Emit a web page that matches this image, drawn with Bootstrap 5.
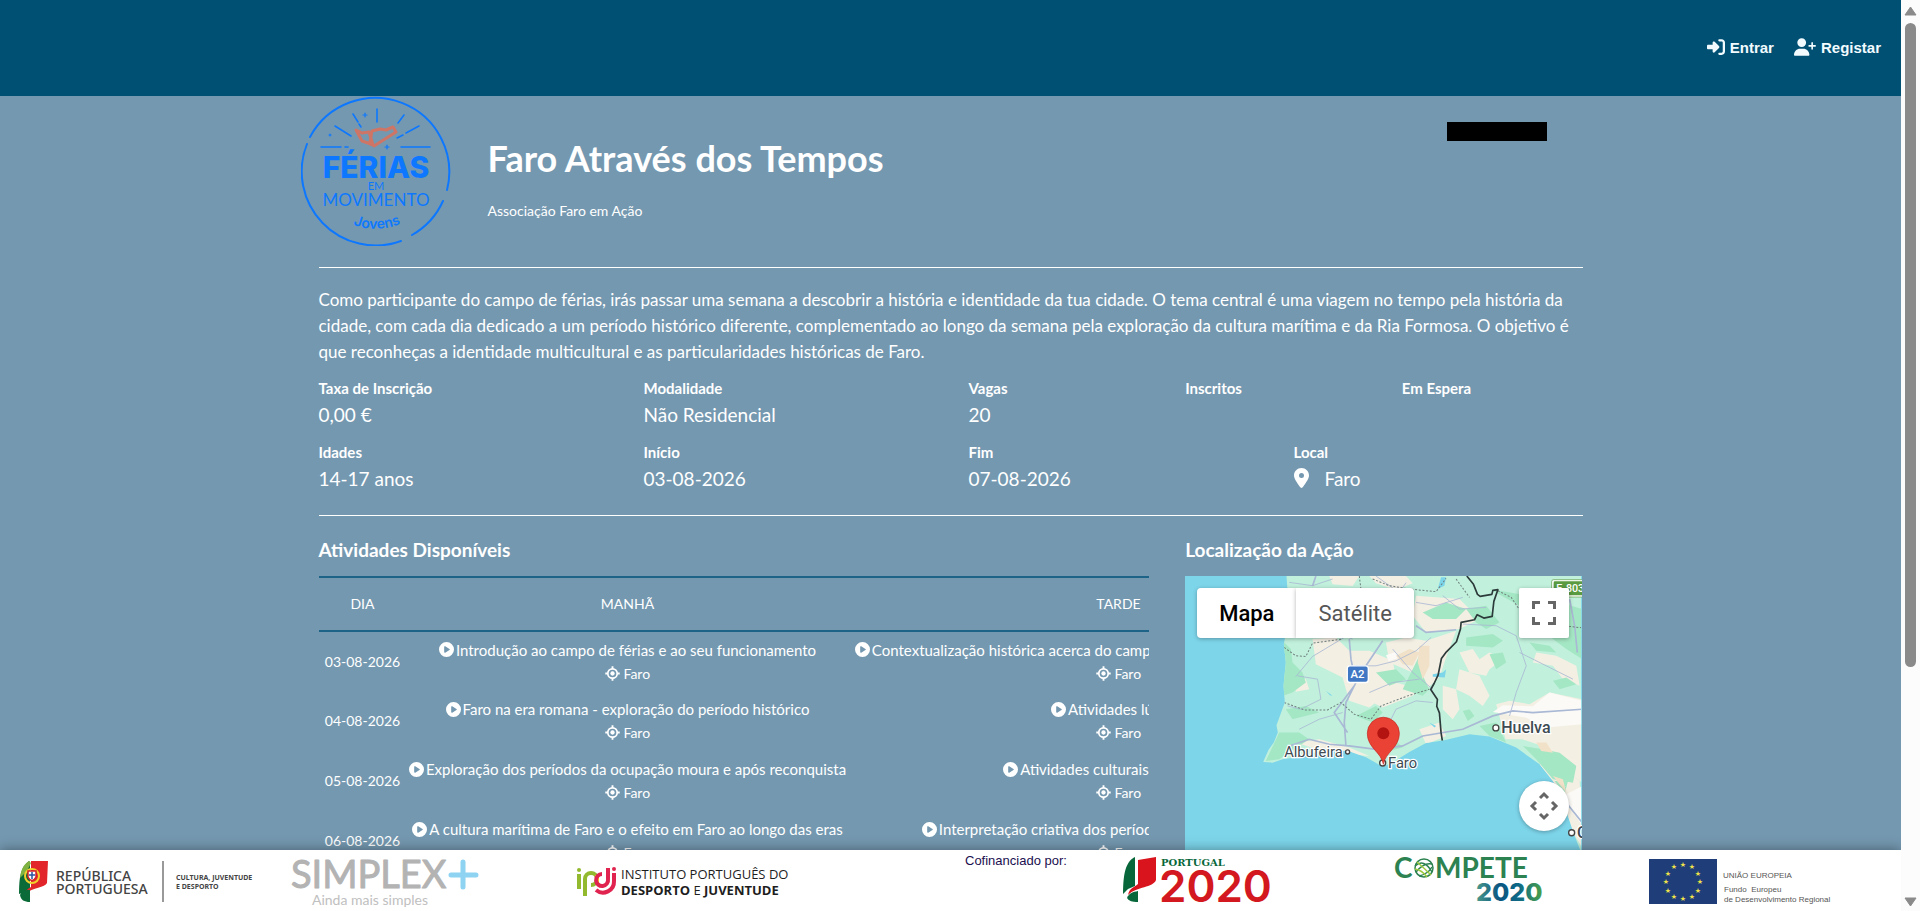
<!DOCTYPE html>
<html lang="pt">
<head>
<meta charset="utf-8">
<meta name="viewport" content="width=device-width, initial-scale=1">
<title>Faro Através dos Tempos</title>
<link href="https://cdn.jsdelivr.net/npm/bootstrap@5.3.0/dist/css/bootstrap.min.css" rel="stylesheet">
<style>
  body { font-family: Lato, "Open Sans", sans-serif; background: #7498b0; color: #fff; }
  .topbar { background: #005073; height: 96px; padding: 0 16px 2px 0; font: 700 15px "Liberation Sans", Arial, sans-serif; }
  .topbar a { color: #f2fbff; text-decoration: none; display: flex; align-items: center; gap: 5px; }
  .page-body { max-width: 1300px; }
  .page-body .row { --bs-gutter-x: 36px; }
  .emblem { width: 150px; height: 150px; }
  .inner { padding: 0 18px; }
  .heading-block { margin-left: 37px; }
  .action-title { font-size: 36px; font-weight: 700; line-height: 44px; margin: 40px 0 21px; }
  .promoter { font-size: 14px; line-height: 20px; }
  .covered { width: 100px; height: 19px; background: #000; margin: 26px 54px 0 0; }
  .rule { border: 0; border-top: 1px solid #fff; opacity: 1; margin: 0; }
  .rule-top { margin-top: 21px; }
  .rule-mid { margin-top: 12px; }
  .intro { font-size: 17px; line-height: 26px; margin: 19px 0 10px; }
  .facts dt { font-size: 15px; line-height: 26px; }
  .facts dd { font-size: 19px; line-height: 28px; margin: 0 0 10px; min-height: 28px; }
  .section-title { font-size: 19px; line-height: 24px; font-weight: 700; margin: 22px 0 14px; }
  .plan { width: 1070px; table-layout: fixed; font-size: 14px; line-height: 24px; text-align: center; border-collapse: collapse; }
  .plan thead th { font-weight: 400; height: 54px; border-top: 2px solid #1d6287; border-bottom: 2px solid #1d6287; }
  .plan td { height: 60px; padding: 5px 3px; white-space: nowrap; vertical-align: middle; }
  .plan .act { display: flex; justify-content: center; align-items: center; gap: 2px; font-size: 15px; line-height: 24px; }
  .plan .act svg { flex-shrink: 0; }
  .ico { fill: currentColor; vertical-align: -2px; }
  .map-box { position: relative; overflow: hidden; height: 400px; font-family: Roboto, sans-serif; }
  .map-box .map-art { display: block; width: 100%; height: 100%; }
  .map-btn { border: 0; background: #fff; height: 50px; font-size: 22px; color: #565656; padding: 0; box-shadow: 0 1px 4px rgba(0,0,0,.3); }
  .map-types { top: 12px; left: 12px; }
  .map-types .map-btn { padding: 0 22px; }
  .map-full { top: 12px; right: 13px; width: 50px; border-radius: 2px; }
  .map-pan { top: 205px; right: 13px; width: 50px; border-radius: 50%; }
  .funders { background: #fff; height: 61px; padding-left: 19px; box-shadow: 0 0 12px rgba(0,0,0,.4);
    display: grid; grid-template-columns: 272fr 286fr 388fr 158fr 271fr 255fr 252fr; }
  .funders svg { display: block; }
  .funders p { color: #1b0f4f; font: 13px/22px "Liberation Sans", Arial, sans-serif; white-space: nowrap; }
  .scroll-rail { width: 19px; background: #fcfcfc; padding: 6px 0 4px 3px; }
  .scroll-grip { width: 11px; margin: 7px 0 0 1px; height: 644px; max-height: 72vh; border-radius: 6px; background: #8a8a8a; }
</style>
</head>
<body>
<svg class="d-none" aria-hidden="true">
  <symbol id="play" viewBox="0 0 512 512"><path fill-rule="evenodd" d="M256 0a256 256 0 1 0 0 512a256 256 0 1 0 0-512zM188 147c8-4 17-4 25 1l144 88c15 9 15 31 0 41l-144 88c-16 9-36-2-36-21V168c0-9 4-17 11-21z"/></symbol>
  <symbol id="aim" viewBox="0 0 16 16"><path d="M8 0.300v3M8 12.700v3M.3 8h3M12.700 8h3" stroke="currentColor" stroke-width="2"/><circle cx="8" cy="8" r="5" fill="none" stroke="currentColor" stroke-width="1.800"/><circle cx="8" cy="8" r="2.300"/></symbol>
</svg>
<div class="d-flex vh-100 overflow-hidden">
  <div class="flex-grow-1 position-relative overflow-hidden">
    <nav class="topbar d-flex justify-content-end align-items-center">
      <a href="#entrar" class="me-3 pe-1"><svg class="ico" width="18" height="18" viewBox="0 0 512 512"><path d="M217.900 105.900L340.700 228.700c7.200 7.200 11.300 17.100 11.300 27.300s-4.100 20.100-11.300 27.300L217.900 406.100c-6.400 6.400-15 9.900-24 9.900c-18.700 0-33.900-15.200-33.900-33.900V320H32c-17.700 0-32-14.300-32-32v-64c0-17.700 14.300-32 32-32h128v-62.100c0-18.700 15.200-33.900 33.900-33.900c9 0 17.600 3.600 24 9.900zM352 416h64c17.700 0 32-14.300 32-32V128c0-17.700-14.300-32-32-32h-64c-17.700 0-32-14.300-32-32s14.300-32 32-32h64c53 0 96 43 96 96v256c0 53-43 96-96 96h-64c-17.700 0-32-14.300-32-32s14.300-32 32-32z"/></svg>Entrar</a>
      <a href="#registar" class="me-1"><svg class="ico" width="22" height="18" viewBox="0 0 640 512"><path d="M96 128a128 128 0 1 1 256 0A128 128 0 1 1 96 128zM0 482.300C0 383.800 79.800 304 178.300 304h91.400C368.200 304 448 383.800 448 482.300c0 16.400-13.300 29.700-29.700 29.700H29.700C13.300 512 0 498.700 0 482.300zM504 312v-64h-64c-13.300 0-24-10.700-24-24s10.700-24 24-24h64v-64c0-13.300 10.700-24 24-24s24 10.700 24 24v64h64c13.300 0 24 10.700 24 24s-10.700 24-24 24h-64v64c0 13.300-10.700 24-24 24s-24-10.700-24-24z"/></svg>Registar</a>
    </nav>

    <main class="page-body mx-auto">
      <header class="d-flex align-items-start">
        <svg class="emblem flex-shrink-0" viewBox="0 0 150 150" role="img" aria-label="Férias em Movimento Jovens">
          <g fill="none" stroke="#0d78ff" stroke-width="2" stroke-linecap="round">
            <path d="M9 41A74 74 0 0 1 146 94M142 105A74 74 0 0 1 111 139M100 145A74 74 0 0 1 6 48"/>
            <path d="M76 13v13M52 18l5 8M58 28l2 3M103 19l-6 8M34 30l16 10M118 30l-13 7M102 39l-6 3M20 51h20M44 51h3M100 51h29" stroke-width="1.600"/>
            <path d="M64 17v4M62 19h4M86 49v4M84 51h4M29 38v2M28 39h2" stroke-width="1.200"/>
          </g>
          <path d="M55 34l6 3l7-1l4 13l-5-2l-6-2zM71 35l8-2l6 1l7-3l3 5l-22 14l-4-4z" fill="none" stroke="#cf7565" stroke-width="3" stroke-linejoin="round"/>
          <g fill="#0d78ff" text-anchor="middle">
            <text x="75" y="82" font-family="Inter" font-weight="800" font-size="30">FÉRIAS</text>
            <text x="75" y="94" font-family="Lato" font-size="11">EM</text>
            <text x="75" y="110" font-family="Lato" font-size="17">MOVIMENTO</text>
            <path id="arc" d="M44 125Q75 141 108 124" fill="none"/>
            <text font-family="Inter" font-weight="600" font-size="14"><textPath href="#arc" startOffset="50%">Jovens</textPath></text>
          </g>
        </svg>
        <div class="heading-block flex-grow-1">
          <h1 class="action-title">Faro Através dos Tempos</h1>
          <p class="promoter mb-0">Associação Faro em Ação</p>
        </div>
        <div class="covered"></div>
      </header>

      <div class="inner">
        <hr class="rule rule-top">
        <p class="intro">Como participante do campo de férias, irás passar uma semana a descobrir a história e identidade da tua cidade. O tema central é uma viagem no tempo pela história da cidade, com cada dia dedicado a um período histórico diferente, complementado ao longo da semana pela exploração da cultura marítima e da Ria Formosa. O objetivo é que reconheças a identidade multicultural e as particularidades históricas de Faro.</p>
        <div class="facts">
          <div class="row">
            <dl class="col-3 mb-0"><dt>Taxa de Inscrição</dt><dd>0,00 €</dd></dl>
            <dl class="col-3 mb-0"><dt>Modalidade</dt><dd>Não Residencial</dd></dl>
            <dl class="col-2 mb-0"><dt>Vagas</dt><dd>20</dd></dl>
            <dl class="col-2 mb-0"><dt>Inscritos</dt><dd></dd></dl>
            <dl class="col-2 mb-0"><dt>Em Espera</dt><dd></dd></dl>
          </div>
          <div class="row">
            <dl class="col-3 mb-0"><dt>Idades</dt><dd>14-17 anos</dd></dl>
            <dl class="col-3 mb-0"><dt>Início</dt><dd>03-08-2026</dd></dl>
            <dl class="col-3 mb-0"><dt>Fim</dt><dd>07-08-2026</dd></dl>
            <dl class="col-3 mb-0"><dt>Local</dt><dd><svg class="ico me-3" width="15" height="20" viewBox="0 0 384 512"><path fill-rule="evenodd" d="M215.700 499.200C267 435 384 279.400 384 192C384 86 298 0 192 0S0 86 0 192c0 87.400 117 243 168.300 307.200c12.300 15.300 35.100 15.300 47.400 0zM192 128a64 64 0 1 1 0 128 64 64 0 1 1 0-128z"/></svg>Faro</dd></dl>
          </div>
        </div>
        <hr class="rule rule-mid">

        <div class="row">
          <section class="col-8">
            <h2 class="section-title">Atividades Disponíveis</h2>
            <div class="overflow-hidden">
              <table class="plan">
                <colgroup><col width="88"><col width="442"><col width="540"></colgroup>
                <thead><tr><th scope="col">DIA</th><th scope="col">MANHÃ</th><th scope="col">TARDE</th></tr></thead>
                <tbody>
                  <tr><td>03-08-2026</td>
                    <td><div class="act"><svg class="ico" width="15" height="15"><use href="#play"/></svg>Introdução ao campo de férias e ao seu funcionamento</div><svg class="ico" width="15" height="15"><use href="#aim"/></svg> Faro</td>
                    <td><div class="act"><svg class="ico" width="15" height="15"><use href="#play"/></svg>Contextualização histórica acerca do campo de férias e cidade, jogos de grupo</div><svg class="ico" width="15" height="15"><use href="#aim"/></svg> Faro</td></tr>
                  <tr><td>04-08-2026</td>
                    <td><div class="act"><svg class="ico" width="15" height="15"><use href="#play"/></svg>Faro na era romana - exploração do período histórico</div><svg class="ico" width="15" height="15"><use href="#aim"/></svg> Faro</td>
                    <td><div class="act"><svg class="ico" width="15" height="15"><use href="#play"/></svg>Atividades lúdicas</div><svg class="ico" width="15" height="15"><use href="#aim"/></svg> Faro</td></tr>
                  <tr><td>05-08-2026</td>
                    <td><div class="act"><svg class="ico" width="15" height="15"><use href="#play"/></svg>Exploração dos períodos da ocupação moura e após reconquista</div><svg class="ico" width="15" height="15"><use href="#aim"/></svg> Faro</td>
                    <td><div class="act"><svg class="ico" width="15" height="15"><use href="#play"/></svg>Atividades culturais (em museus)</div><svg class="ico" width="15" height="15"><use href="#aim"/></svg> Faro</td></tr>
                  <tr><td>06-08-2026</td>
                    <td><div class="act"><svg class="ico" width="15" height="15"><use href="#play"/></svg>A cultura marítima de Faro e o efeito em Faro ao longo das eras</div><svg class="ico" width="15" height="15"><use href="#aim"/></svg> Faro</td>
                    <td><div class="act"><svg class="ico" width="15" height="15"><use href="#play"/></svg>Interpretação criativa dos períodos históricos trabalhados</div><svg class="ico" width="15" height="15"><use href="#aim"/></svg> Faro</td></tr>
                </tbody>
              </table>
            </div>
          </section>

          <section class="col-4">
            <h2 class="section-title">Localização da Ação</h2>
            <div class="map-box">
              <svg class="map-art" viewBox="48 141 1190 1200" preserveAspectRatio="xMinYMin slice" role="img" aria-label="Mapa do Algarve">
                <defs><clipPath id="land"><path id="coast" d="M352 141L356 200L352 300L344 345L350 400L343 470L347 520L322 588L326 610L314 640L298 662L282 698L310 700L345 688L400 684L470 660L540 666L590 684L640 712L668 700L720 668L770 641L825 633L900 615L960 622L1040 655L1110 705L1150 755L1175 800L1195 860L1215 920L1235 970V141Z"/></clipPath></defs>
                <path fill="#7dd5ea" d="M48 141h1200v1300H48z"/>
                <g clip-path="url(#land)">
                  <path fill="#c1f1dc" d="M200 100h1100v1000H200z"/>
                  <g fill="#f4efe3">
                    <path d="M480 141l90 0l-20 30l-60 -5zM600 141l110 0l20 22l-50 20l-60 -20zM430 330l70-5l40 40l60 0l70 30l10 50l-30 50l-50 40l-60-20l-20-70l-80-40zM650 340l60-15l60 10l90-30l-30 80l-20 60l-40 35l-40-50l-70-30zM740 200l130 10l60 60l-60 30l-100 10l-40-50zM370 440l40 10l10 30l-40 8zM620 450l60 10l70 20l-20 20l-90 35l-40-20zM820 470l40 10l10 60l-20 30l-30-30zM870 370l40-10l20 30l30-20l40 20l-40 30l-10 20l-50-10zM870 420l60 20l30 60l-20 30l-40-30l-40-20zM1100 370l60 10l60 30l10 60l-50-20l-30-40l-60-10zM980 525l40-10l60 10l60-35l98 20l0 250l-40 -30l-50-30l-30-50l-60-20l-50 0zM750 600l60-20l20 40l-60 25zM380 640l70-10l90 25l60 25l-60-5l-80-10zM1110 705l40-10l80 60l8 200l-50-80z"/>
                  </g>
                  <path fill="#fbfaf7" d="M970 548l30-20l90 3l50-41l98 25v70l-110 10l-60-30zM650 378l30-10l8 18l-30 10zM1180 800l58-30v120l-20-30z"/>
                  <g fill="#a4e7c4">
                    <path d="M345 340l20 20l5 40l30 30l10 30l-40 30l-28 10zM420 220l60 20l-10 40l-50-10zM620 430l60-10l30 30l-50 20zM700 480l50-100l30 0l-20 60l20 40l-20 20zM760 250l70-30l60 20l-30 30l-70 0zM960 180l90 50l60 70l80 60l48 30v-150l-100-30zM890 325l80-10l30 20l-30 20l-80-5zM960 375l40-5l10 30l-30 20zM890 240l60-10l40 50l-40 20l-30-20zM350 540l60-10l40 20l-80 20zM560 560l60-30l20 20l-30 30zM1080 340l60 10l20 20l-60-5zM1150 455l40-10l30 20l-50 15zM880 545l20-5l15 20l-20 15zM930 590l50-10l30 60l-50-20zM1060 650l60 10l50 10l50 40l-10 50l-60-10l-50-60zM1155 755l40 0l-10 40zM330 610l60 0l30 20l-90 60l-40 5zM620 640l60-5l20 20l-60 15z"/>
                  </g>
                  <path fill="#f0e1c8" d="M680 380l40-20l30 10l-20 40l-30-5zM750 350l30 0v60l-20 40l-15-50zM1100 640l30 0l20 30l-35-5zM1150 740l30 10l10 40z"/>
                  <path fill="#7dd5ea" d="M815 145l15 0l-5 25l-20 10zM790 435l30-5l10-10l-4 25l-36-2zM470 485l20 15l-8-2zM780 580l20 10l-5 5z"/>
                  <g fill="none" stroke="#a9b8d4" stroke-width="4">
                    <path d="M540 330l5 60l15 70l-30 60l-5 60l5 70M360 650l60-20l60 15l60 5l80 10l80-10l60-30l120-20l90-40l60-15l60 5l180-12M555 470l-60 80l40 60M590 410l50-75M740 290l30 20l90-8M1200 210l15 80l8 80M1190 820l48 60M440 141l-10 30" stroke-width="5"/>
                    <path d="M385 440l60 10l10 60l-60 30l-40-10M550 330l-20-8l-100 60l-50 60M560 410l60 0l60-15l60-30l45-40M600 490l70-30l80-10M670 360l60 70l60 50M650 600l30-60l60-25l50 5M1060 380l10 30l-30 80l-20 70M1050 370l100 50l60 30M740 220l60 10l80-25M390 600l60-30l70-20M620 141l70 50l20-30M820 200l50 40l80-5M1060 380l-20-60l-60-30l-100-5M360 160l70 10l60-20" stroke-width="2.500"/>
                  </g>
                  <path d="M345 355l35 25l30 2l20-40l90-12M345 520l60 22l70 0l40-22l40 35l50 15l30-40l80-30l65-20M610 150l50 20l60 10l80 8l30-40M570 141l5 40M860 150l40 55M985 185l40 20l40 60l70 20l110 12" fill="none" stroke="#6f7f7f" stroke-width="3" stroke-dasharray="6 5"/>
                  <path d="M892 141l20 25l12 30l8 6l35-6l3-12l15-2l-12 35l-5 45l-25 5l-20-10l-8 15l-40 8l-2 20l-12 38l-30 30l-15 20l-10 50l-12 25l-10 18l20 30l-2 20l8 20l5 60l8 50" fill="none" stroke="#2d3a3a" stroke-width="5" stroke-linejoin="round"/>
                </g>
                <g><rect x="1146" y="152" width="120" height="52" rx="6" fill="#fff" stroke="#5a9a40" stroke-width="2"/><rect x="1152" y="157" width="120" height="42" rx="4" fill="#5a9a40"/><text x="1160" y="189" fill="#fff" font-size="32" font-weight="500">E-803</text></g>
                <rect x="534" y="410" width="63" height="50" rx="8" fill="#3f77c4" stroke="#fff" stroke-width="4"/><text x="544" y="446" fill="#fff" font-size="34" font-weight="500">A2</text>
                <g fill="#404a52" stroke="#fff" stroke-width="7" paint-order="stroke" font-weight="500">
                  <text x="345" y="684" font-size="44" font-weight="400">Albufeira</text>
                  <text x="995" y="611" font-size="48">Huelva</text>
                  <text x="656" y="716" font-size="44" font-weight="400">Faro</text>
                  <text x="1222" y="927" font-size="48">Cádiz</text>
                </g>
                <g fill="#fff" stroke="#444" stroke-width="4"><circle cx="535" cy="668" r="6"/><circle cx="979" cy="596" r="9"/><circle cx="640" cy="701" r="9"/><circle cx="1206" cy="910" r="9"/></g>
                <path d="M642 705C636 668 594 656 594 612A48 48 0 0 1 690 612C690 656 648 668 642 705Z" fill="#ea4335" stroke="#c5221f" stroke-width="2"/><circle cx="642" cy="612" r="18" fill="#b31412"/>
              </svg>
              <div class="map-types position-absolute d-flex">
                <button type="button" class="map-btn rounded-start-1 fw-medium text-black">Mapa</button><button type="button" class="map-btn rounded-end-1">Satélite</button>
              </div>
              <button type="button" class="map-btn map-full position-absolute" aria-label="Ecrã inteiro"><svg class="d-block mx-auto" width="24" height="24" viewBox="0 0 24 24" fill="none" stroke="#666" stroke-width="3"><path d="M1.500 8V1.500H8M16 1.500h6.500V8M22.500 16v6.500H16M8 22.500H1.500V16"/></svg></button>
              <button type="button" class="map-btn map-pan position-absolute" aria-label="Mover o mapa"><svg class="d-block mx-auto" width="30" height="30" viewBox="0 0 30 30" fill="none" stroke="#666" stroke-width="3"><path d="M11 7l4-4l4 4M11 23l4 4l4-4M7 11l-4 4l4 4M23 11l4 4l-4 4"/></svg></button>
            </div>
          </section>
        </div>
      </div>
    </main>

    <footer class="funders position-absolute bottom-0 start-0 end-0">
      <svg width="240" height="61" role="img" aria-label="República Portuguesa">
        <path d="M10 11C2 17 0 26 0 44L11 40V12z" fill="#0b6b38"/><path d="M12 11L29 11L28 33C26 38 14 37 6 44C6 41 8 39 12 37z" fill="#e2252b"/><path d="M1 45C3 40 8 40 11 40V52C5 52 2 50 1 45z" fill="#0b6b38"/><path d="M10 11C4 15 2 20 1 28L8 21L12 13z" fill="#7fb241"/>
        <circle cx="13" cy="26" r="7" fill="none" stroke="#f0cf2c" stroke-width="2"/><path d="M9 21h8v6q-4 7-8 0z" fill="#fff" stroke="#d2232a" stroke-width="1.500"/><path d="M13 22v7M10 25h6" stroke="#2856a3" stroke-width="1.500"/>
        <g fill="#444" font-family="Noto Sans"><text x="37" y="31" font-size="14" font-weight="500">REPÚBLICA</text><text x="37" y="44" font-size="14" font-weight="500">PORTUGUESA</text>
        <text x="157" y="30" font-size="7" font-weight="700">CULTURA, JUVENTUDE</text><text x="157" y="39" font-size="7" font-weight="700">E DESPORTO</text></g>
        <path d="M144 11v41" stroke="#777" stroke-width="1.500"/>
      </svg>
      <svg width="200" height="61" role="img" aria-label="Simplex+">
        <text x="0" y="38" font-family="Lato" font-size="38" font-weight="400" fill="#b3b3b3" stroke="#b3b3b3" stroke-width="1" stroke-linejoin="round">SIMPLEX</text>
        <path d="M172 12v25M160 25h25" stroke="#8ed4f2" stroke-width="5" stroke-linecap="round"/>
        <text x="21" y="55" font-family="Lato" font-size="14" fill="#c0c0c0">Ainda mais simples</text>
      </svg>
      <svg width="215" height="61" role="img" aria-label="Instituto Português do Desporto e Juventude">
        <g fill="none" stroke-width="4"><path d="M2 24v15" stroke="#93b92f"/><path d="M8 46V29A6 6 0 1 1 14 35" stroke="#93b92f"/><path d="M20 25V34" stroke="#f4d81c"/><path d="M31 18V29A6 6 0 1 1 25 24" stroke="#e0244f"/><path d="M37 23V31A11 11 0 0 1 19 40" stroke="#e0244f"/></g><circle cx="2" cy="20" r="2" fill="#93b92f"/><circle cx="37" cy="19" r="2" fill="#e0244f"/>
        <g fill="#1e1e1e" font-family="Open Sans" font-size="13"><text x="44" y="29">INSTITUTO PORTUGUÊS DO</text><text x="44" y="45"><tspan font-weight="700">DESPORTO</tspan> E <tspan font-weight="700">JUVENTUDE</tspan></text></g>
      </svg>
      <p class="mb-0">Cofinanciado por:</p>
      <svg width="160" height="61" role="img" aria-label="Portugal 2020">
        <path d="M12 7C4 11 0 20 0 44L5 39L12 36z" fill="#07673a"/><path d="M15 10L33 7V30C30 38 14 36 5 45C6 38 12 37 15 34z" fill="#d9141c"/><path d="M4 48C6 43 10 42 15 41V52C9 52 6 51 4 48z" fill="#07673a"/>
        <text x="38" y="16" font-family="DejaVu Serif" font-weight="700" font-size="10" fill="#07673a">PORTUGAL</text>
        <text x="36" y="52" font-family="Inter" font-weight="600" font-size="44" fill="#d31820">2020</text>
      </svg>
      <svg width="155" height="61" role="img" aria-label="Compete 2020">
        <defs><linearGradient id="tide"><stop offset="0" stop-color="#4b9a8b"/><stop offset=".35" stop-color="#0a5582"/><stop offset=".65" stop-color="#0f6a86"/><stop offset="1" stop-color="#4aa147"/></linearGradient></defs>
        <g fill="#2c8250" font-family="Lato" font-weight="700" font-size="28"><text x="0" y="28">C</text><text x="41" y="28">MPETE</text></g>
        <g fill="none" stroke="#2c8250" stroke-width="1.500"><circle cx="30" cy="18" r="9"/><path d="M21 16Q30 8 38 22M22 22Q30 12 38 14M25 26Q34 24 38 17"/><path d="M23 12Q30 18 37 25M21 19Q28 20 33 27" stroke="#9cc93b"/></g>
        <text x="82" y="51" font-family="Inter" font-weight="800" font-size="25" fill="url(#tide)">2020</text>
      </svg>
      <svg width="200" height="61" role="img" aria-label="União Europeia">
        <rect y="9" width="68" height="45" fill="#1f3d78"/>
        <g fill="#f0e24a" font-family="DejaVu Sans" font-size="7" text-anchor="middle"><text x="34" y="17">★</text><text x="43" y="19">★</text><text x="49" y="26">★</text><text x="51" y="34">★</text><text x="49" y="43">★</text><text x="43" y="49">★</text><text x="34" y="51">★</text><text x="25" y="49">★</text><text x="19" y="43">★</text><text x="17" y="34">★</text><text x="19" y="26">★</text><text x="25" y="19">★</text></g>
        <g fill="#555" font-family="Liberation Sans" font-size="8"><text x="74" y="28">UNIÃO EUROPEIA</text><text x="75" y="42">Fundo&#160; Europeu</text><text x="75" y="52">de Desenvolvimento Regional</text></g>
      </svg>
    </footer>
  </div>
  <div class="scroll-rail flex-shrink-0 d-flex flex-column" aria-hidden="true">
    <svg width="13" height="10" viewBox="0 0 13 10"><path d="M6.500 1L12 9H1z" fill="#8a8a8a" stroke="#8a8a8a" stroke-linejoin="round"/></svg>
    <div class="scroll-grip"></div>
    <svg class="mt-auto" width="13" height="10" viewBox="0 0 13 10"><path d="M6.500 9L12 1H1z" fill="#8a8a8a" stroke="#8a8a8a" stroke-linejoin="round"/></svg>
  </div>
</div>
<script src="https://cdn.jsdelivr.net/npm/bootstrap@5.3.0/dist/js/bootstrap.bundle.min.js"></script>
</body>
</html>
